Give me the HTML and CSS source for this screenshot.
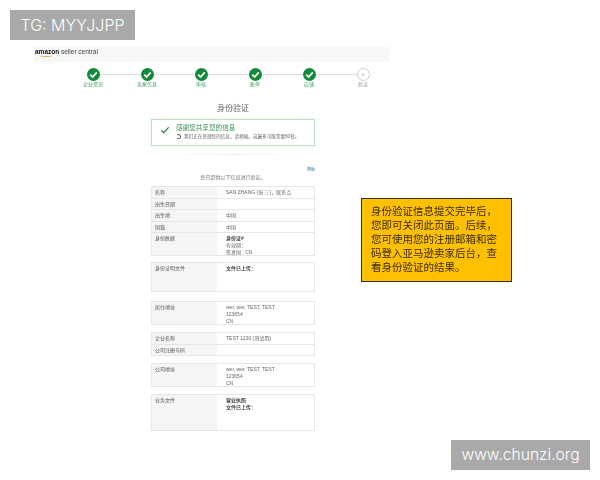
FILE: index.html
```html
<!DOCTYPE html>
<html lang="zh-CN">
<head>
  <meta charset="UTF-8" />
  <meta name="viewport" content="width=device-width, initial-scale=1.0" />
  <title>身份验证</title>
  <link rel="stylesheet" href="styles.css">
</head>
<body>
  <div class="tag tag-top">TG: MYYJJPP</div>

  <div class="shot">
    <div class="topbar">
      <span class="logo"><b>amazon</b> seller central<i class="smile"></i></span>
    </div>

    <div class="steps">
      <div class="step done"><span class="dot"><svg viewBox="0 0 12 12"><path d="M3 6.2 5.2 8.3 9 4" /></svg></span><span class="name">企业资讯</span></div>
      <div class="step done"><span class="dot"><svg viewBox="0 0 12 12"><path d="M3 6.2 5.2 8.3 9 4" /></svg></span><span class="name">卖家信息</span></div>
      <div class="step done"><span class="dot"><svg viewBox="0 0 12 12"><path d="M3 6.2 5.2 8.3 9 4" /></svg></span><span class="name">审核</span></div>
      <div class="step done"><span class="dot"><svg viewBox="0 0 12 12"><path d="M3 6.2 5.2 8.3 9 4" /></svg></span><span class="name">账单</span></div>
      <div class="step done"><span class="dot"><svg viewBox="0 0 12 12"><path d="M3 6.2 5.2 8.3 9 4" /></svg></span><span class="name">店铺</span></div>
      <div class="step"><span class="dot">6</span><span class="name">验证</span></div>
    </div>

    <div class="content">
      <h2 class="title">身份验证</h2>

      <div class="alert">
        <svg class="alert-check" viewBox="0 0 14 12"><path d="M1.5 6.5 5 10 12.5 2" /></svg>
        <div>
          <div class="alert-head">感谢您共享您的信息</div>
          <div class="alert-sub"><i class="spinner"></i>我们正在处理您的信息&#xFF0C;请稍候。这最多可能需要60秒。</div>
        </div>
      </div>

      <div class="fade"></div>
      <div class="help">帮助</div>
      <div class="intro">您已提供以下信息进行验证。</div>

      <div class="group">
        <div class="row"><div class="label">名称</div><div class="value">SAN ZHANG (张 三)&#xFF0C;联系点</div></div>
        <div class="row"><div class="label">出生日期</div><div class="value"></div></div>
        <div class="row"><div class="label">出生地</div><div class="value">中国</div></div>
        <div class="row"><div class="label">国籍</div><div class="value">中国</div></div>
        <div class="row h25"><div class="label">身份数据</div><div class="value"><b>身份证#</b><br>有效期&#xFF1A;<br>签发国 : CN</div></div>
      </div>

      <div class="group gap6">
        <div class="row h30"><div class="label">身份证明文件</div><div class="value"><b>文件已上传&#xFF1A;</b></div></div>
      </div>

      <div class="group gap9">
        <div class="row h24"><div class="label">居住地址</div><div class="value">wer, wer, TEST, TEST<br>123654<br>CN</div></div>
      </div>

      <div class="group gap7">
        <div class="row"><div class="label">企业名称</div><div class="value">TEST 1230 (测试用)</div></div>
        <div class="row"><div class="label">公司注册号码</div><div class="value"></div></div>
      </div>

      <div class="group gap7">
        <div class="row h24"><div class="label">公司地址</div><div class="value">wer, wer, TEST, TEST<br>123654<br>CN</div></div>
      </div>

      <div class="group gap7">
        <div class="row h37"><div class="label">业务文件</div><div class="value"><b>营业执照</b><br><b>文件已上传&#xFF1A;</b></div></div>
      </div>
    </div>
  </div>

  <div class="note">身份验证信息提交完毕后&#xFF0C;您即可关闭此页面。后续&#xFF0C;您可使用您的注册邮箱和密码登入亚马逊卖家后台&#xFF0C;查看身份验证的结果。</div>

  <div class="tag tag-bottom">www.chunzi.org</div>
</body>
</html>
```

FILE: styles.css
```css
body {
  margin: 0;
  height: 480px;
  overflow: hidden;
  background: #fff;
  position: relative;
  font-family: "Liberation Sans", "Noto Sans CJK SC", sans-serif;
}

.tag {
  position: absolute;
  background: #a9a9a9;
  color: #fff;
  height: 30px;
  line-height: 30px;
  font-family: "Inter", "Liberation Sans", sans-serif;
  font-size: 16px;
  font-weight: 300;
  text-align: center;
}

.tag-top {
  left: 10px;
  top: 10px;
  width: 125px;
}

.tag-bottom {
  left: 451px;
  top: 440px;
  width: 139px;
  font-size: 15.6px;
}

.shot {
  width: 355px;
  margin-left: 34px;
  padding-top: 47px;
  filter: blur(0.45px);
}

.topbar {
  display: flex;
  height: 15px;
  background: #f7f7f7;
}

.logo {
  position: relative;
  height: 9px;
  margin-left: 1px;
  font-size: 6.5px;
  line-height: 9px;
  color: #444;
}

.logo b {
  color: #111;
}

.smile {
  position: absolute;
  left: 4px;
  top: 7px;
  width: 14px;
  height: 2px;
  border-bottom: 1px solid #e9a23b;
  border-radius: 0 0 50% 50%;
}

.steps {
  display: flex;
  margin: 6px 0 0 32px;
  width: 324px;
}

.step {
  width: 54.4px;
  position: relative;
  display: flex;
  flex-direction: column;
  align-items: center;
  font-size: 5px;
  color: #3c9a5f;
}

.step::after {
  content: "";
  position: absolute;
  left: 50%;
  width: 100%;
  top: 6px;
  height: 1px;
  background: #ddd;
}

.step:last-child::after {
  display: none;
}

.dot {
  width: 11px;
  height: 11px;
  border: 1px solid #ccc;
  border-radius: 50%;
  background: #fff;
  color: #999;
  font-size: 4px;
  display: flex;
  align-items: center;
  justify-content: center;
  position: relative;
  z-index: 1;
}

.done .dot {
  width: 13px;
  height: 13px;
  border: 0;
  background: #128a3a;
}

.dot svg {
  width: 13px;
  height: 13px;
  fill: none;
  stroke: #fff;
  stroke-width: 1.6;
}

.name {
  line-height: 7px;
}

.step:last-child .name {
  color: #999;
}

.content {
  width: 164px;
  margin: 0 0 0 117px;
}

.title {
  margin: 15px 0 0;
  font-size: 8px;
  line-height: 12px;
  font-weight: 400;
  color: #666;
  text-align: center;
}

.alert {
  margin-top: 4px;
  height: 27px;
  box-sizing: border-box;
  border: 1px solid #bfe0c4;
  box-shadow: 0 0 1px #cfe8d2;
  display: flex;
  align-items: flex-start;
  padding: 4px 0 0 8px;
  gap: 6px;
}

.alert-check {
  width: 10px;
  height: 8px;
  margin-top: 2px;
  fill: none;
  stroke: #127a30;
  stroke-width: 1.8;
}

.alert-head {
  font-size: 6.6px;
  line-height: 8px;
  color: #3d8a50;
  white-space: nowrap;
}

.alert-sub {
  margin-top: 1px;
  font-size: 4.6px;
  line-height: 7px;
  color: #666;
  display: flex;
  align-items: center;
  white-space: nowrap;
}

.spinner {
  flex: none;
  width: 5px;
  height: 5px;
  margin-right: 3px;
  box-sizing: border-box;
  border: 0.7px solid #666;
  border-left-color: transparent;
  border-radius: 50%;
}

.fade {
  height: 1px;
  margin: 8px 14px 0;
  background: linear-gradient(to right, #fff, #eee, #fff);
}

.help {
  margin-top: 12px;
  font-size: 4px;
  line-height: 5px;
  color: #1f6f9e;
  text-align: right;
}

.intro {
  margin-top: 1px;
  font-size: 5px;
  line-height: 8px;
  color: #777;
  text-align: center;
}

.group {
  margin-top: 5px;
  border: 1px solid #e6e6e6;
  border-width: 1px 1px 0;
}

.gap6 { margin-top: 6px; }
.gap7 { margin-top: 7px; }
.gap9 { margin-top: 9px; }

.row {
  display: flex;
  min-height: 10.5px;
  border-bottom: 1px solid #e6e6e6;
  font-size: 5px;
  line-height: 7px;
  color: #666;
}

.h25 { height: 22px; }
.h30 { height: 28px; }
.h24 { height: 22px; }
.h37 { height: 35px; }

.label {
  width: 65px;
  padding: 2px 0 0 3px;
  box-sizing: border-box;
  background: #f5f5f5;
  color: #555;
}

.value {
  flex: 1;
  padding: 2px 0 0 9px;
}

.value b {
  color: #444;
}

.note {
  position: absolute;
  left: 361px;
  top: 198px;
  width: 151px;
  height: 84px;
  box-sizing: border-box;
  padding: 5px 9px 0;
  background: #ffc000;
  border: 1px solid #3a2a10;
  font-size: 10.5px;
  line-height: 14px;
  color: #3a2c05;
  filter: blur(0.3px);
}
```
